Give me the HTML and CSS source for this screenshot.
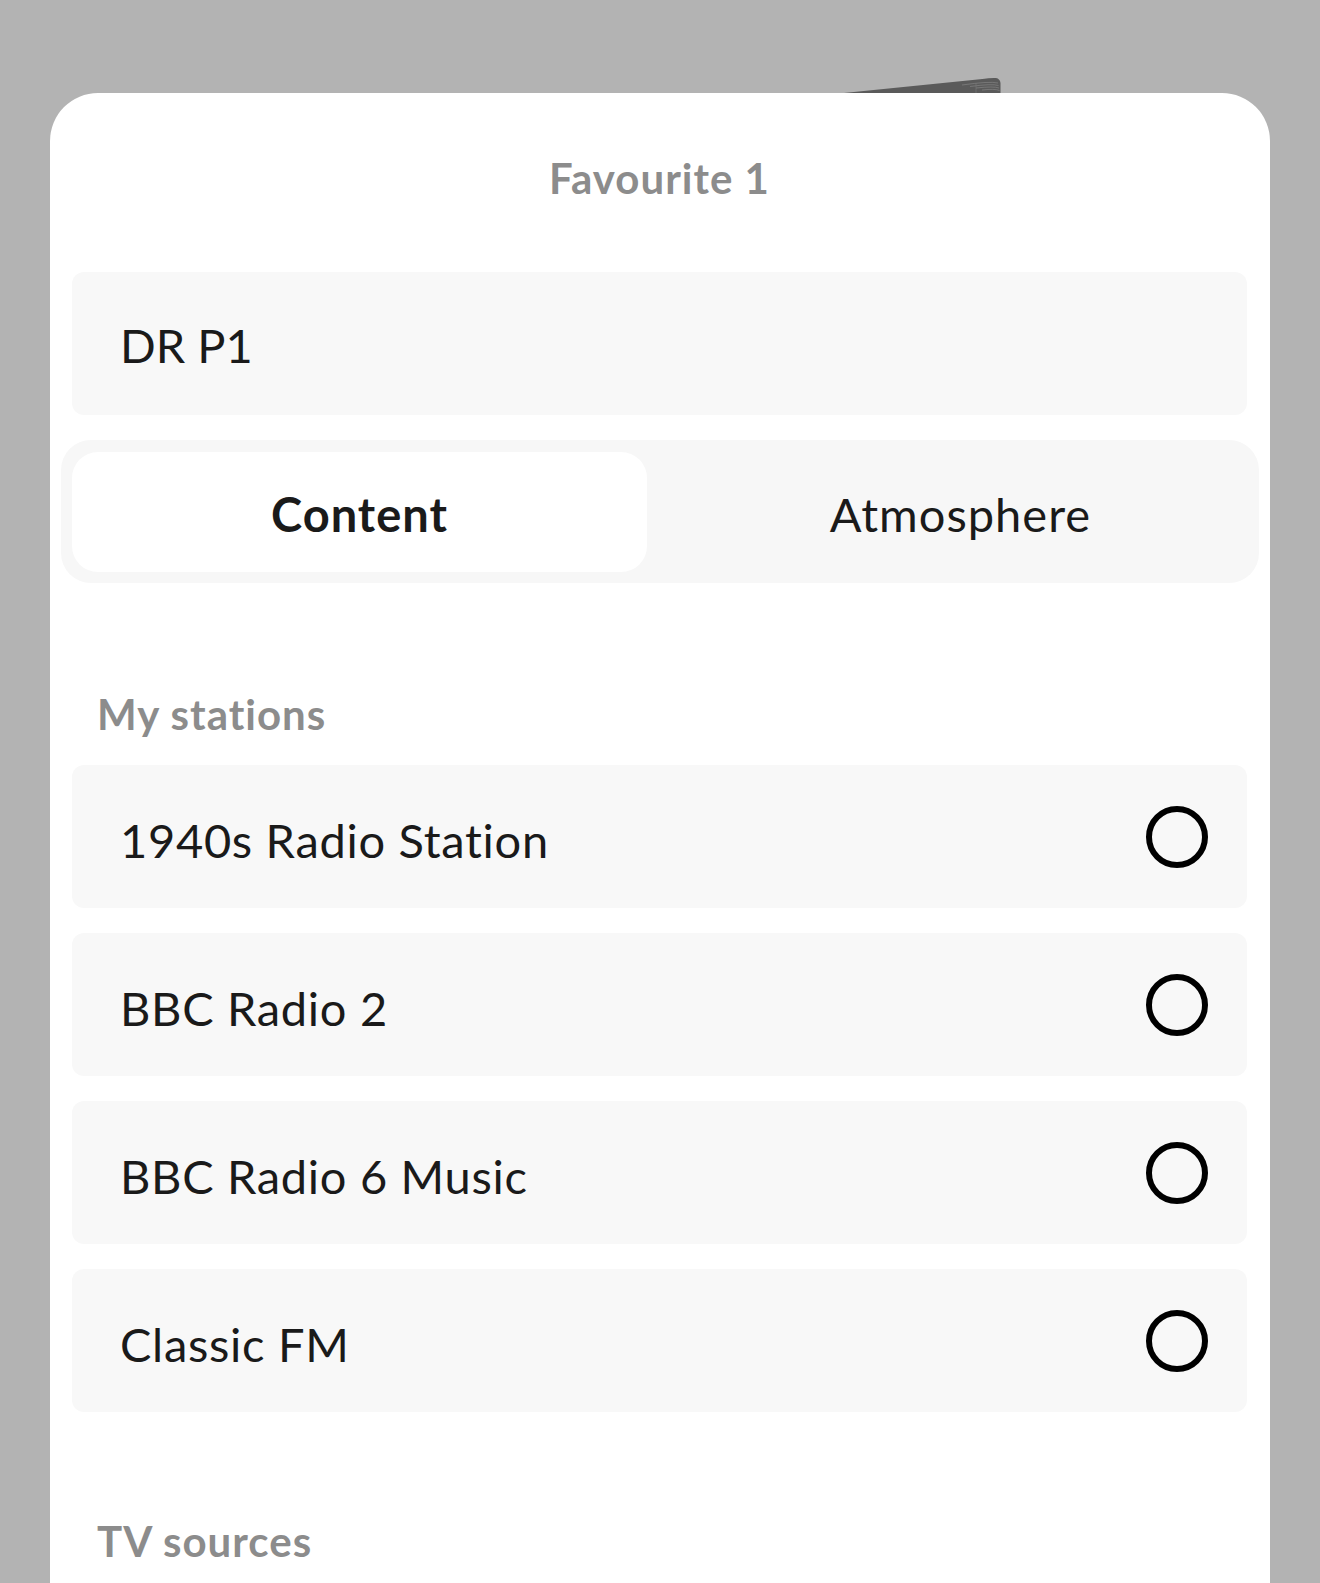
FILE: index.html
```html
<!DOCTYPE html>
<html lang="en">
<head>
<meta charset="utf-8">
<title>Favourite 1</title>
<link rel="stylesheet" href="styles.css">
</head>
<body>
<svg class="device" width="160" height="18" viewBox="0 0 160 18" aria-hidden="true">
  <path d="M2,16 L138,2.2 Q150,0.6 154,1 Q158,1.8 158.5,6 L158.5,16 Z" fill="#5a5a5a"/>
  <path d="M120,8 Q148,4 156,6" fill="none" stroke="#8a8a8a" stroke-width="0.6"/>
  <path d="M128,9.5 Q150,6.5 156.5,8.5" fill="none" stroke="#8a8a8a" stroke-width="0.6"/>
  <path d="M134,11 Q152,9 157,11" fill="none" stroke="#8a8a8a" stroke-width="0.6"/>
  <path d="M140,13 Q153,11.5 157.5,13.5" fill="none" stroke="#8a8a8a" stroke-width="0.6"/>
  <path d="M134,6 L134,16" fill="none" stroke="#7a7a7a" stroke-width="0.6"/>
</svg>
<main class="sheet">
  <h1 class="title">Favourite 1</h1>
  <div class="name-field">DR P1</div>
  <div class="segmented">
    <div class="seg seg-active">Content</div>
    <div class="seg">Atmosphere</div>
  </div>
  <h2 class="section">My stations</h2>
  <ul class="list">
    <li class="row"><span class="row-label">1940s Radio Station</span><span class="radio"></span></li>
    <li class="row"><span class="row-label">BBC Radio 2</span><span class="radio"></span></li>
    <li class="row"><span class="row-label">BBC Radio 6 Music</span><span class="radio"></span></li>
    <li class="row"><span class="row-label">Classic FM</span><span class="radio"></span></li>
  </ul>
  <h2 class="section">TV sources</h2>
</main>
</body>
</html>
```
FILE: styles.css
```css
html, body {
  margin: 0;
  padding: 0;
}
body {
  background: #b3b3b3;
  height: 1583px;
  overflow: hidden;
  position: relative;
  font-family: "Lato", "Liberation Sans", sans-serif;
  color: #1a1a1a;
}
.device {
  position: absolute;
  left: 842px;
  top: 77px;
}
.sheet {
  position: relative;
  margin: 93px 0 0 50px;
  width: 1220px;
  box-sizing: border-box;
  min-height: 1490px;
  background: #ffffff;
  border-radius: 48px 48px 0 0;
  padding: 60px 23px 0 22px;
}
.title {
  margin: 0;
  text-align: center;
  font-size: 42px;
  line-height: 50px;
  font-weight: 700;
  color: #8c8c8c;
  letter-spacing: 1px;
}
.name-field {
  margin-top: 69px;
  height: 143px;
  box-sizing: border-box;
  background: #f8f8f8;
  border-radius: 12px;
  display: flex;
  align-items: center;
  padding: 2px 0 0 48px;
  font-size: 47px;
  letter-spacing: 0;
}
.segmented {
  margin: 25px -12px 0 -11px;
  height: 143px;
  box-sizing: border-box;
  padding: 12px 11px 11px;
  background: #f7f7f7;
  border-radius: 30px;
  display: grid;
  grid-template-columns: 575px 575px;
  justify-content: space-between;
}
.seg {
  display: flex;
  align-items: center;
  justify-content: center;
  padding-top: 4px;
  font-size: 47px;
  letter-spacing: 1px;
  border-radius: 26px;
}
.seg-active {
  background: #ffffff;
  font-weight: 700;
}
.section {
  margin: 106px 0 0 25px;
  font-size: 42px;
  line-height: 50px;
  font-weight: 700;
  color: #8c8c8c;
  letter-spacing: 1px;
}
.list {
  list-style: none;
  margin: 26px 0 0;
  padding: 0;
  display: flex;
  flex-direction: column;
  gap: 25px;
}
.row {
  height: 143px;
  box-sizing: border-box;
  background: #f8f8f8;
  border-radius: 12px;
  display: flex;
  align-items: center;
  justify-content: space-between;
  padding: 0 39px 0 48px;
}
.row-label {
  font-size: 47px;
  padding-top: 6px;
  letter-spacing: 0.7px;
}
.radio {
  width: 62px;
  height: 62px;
  box-sizing: border-box;
  border: 6px solid #000000;
  border-radius: 50%;
}
.list + .section {
  margin-top: 104px;
}
```
